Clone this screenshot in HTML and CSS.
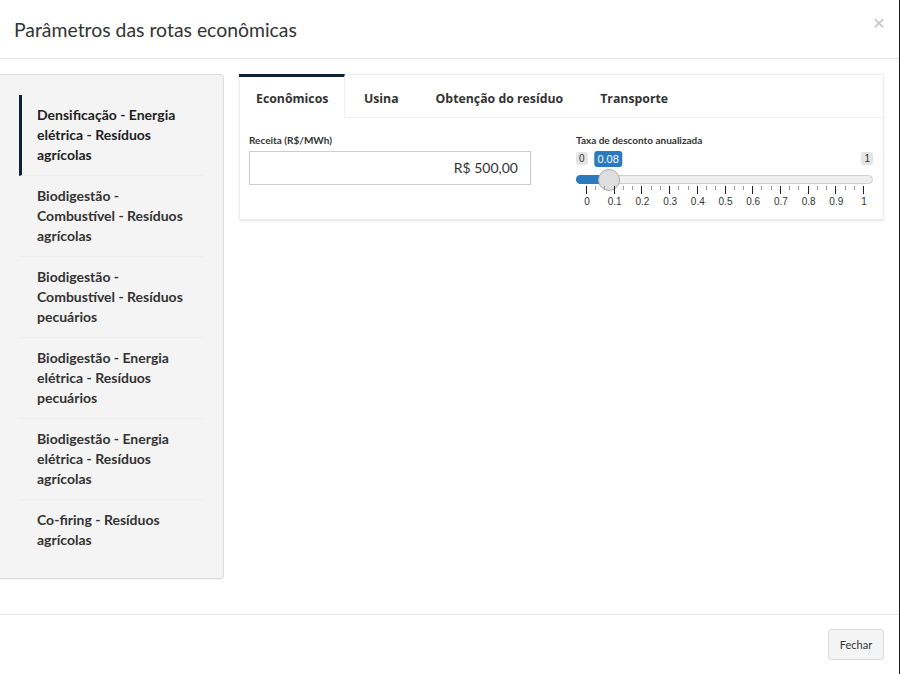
FILE: index.html
```html
<!DOCTYPE html>
<html lang="pt">
<head>
<meta charset="utf-8">
<title>Parâmetros das rotas econômicas</title>
<link rel="stylesheet" href="styles.css">
</head>
<body>
<div class="modal">
  <div class="modal-header">
    <h4 class="modal-title">Parâmetros das rotas econômicas</h4>
    <span class="close">&times;</span>
  </div>
  <div class="modal-body">
    <nav class="side">
      <div class="side-item active">Densificação - Energia elétrica - Resíduos agrícolas</div>
      <div class="side-item">Biodigestão - Combustível - Resíduos agrícolas</div>
      <div class="side-item">Biodigestão - Combustível - Resíduos pecuários</div>
      <div class="side-item">Biodigestão - Energia elétrica - Resíduos pecuários</div>
      <div class="side-item">Biodigestão - Energia elétrica - Resíduos agrícolas</div>
      <div class="side-item last">Co-firing - Resíduos agrícolas</div>
    </nav>
    <section class="main">
      <div class="card">
        <div class="tabs">
          <div class="tab active">Econômicos</div>
          <div class="tab">Usina</div>
          <div class="tab">Obtenção do resíduo</div>
          <div class="tab">Transporte</div>
          <div class="tab-fill"></div>
        </div>
        <div class="card-body">
          <div class="field">
            <label class="lbl">Receita (R$/MWh)</label>
            <div class="input">R$ 500,00</div>
          </div>
          <div class="field">
            <label class="lbl">Taxa de desconto anualizada</label>
            <div class="slider">
              <div class="badges">
                <span class="badge min">0</span>
                <span class="badge val" style="left: 8%">0.08</span>
                <span class="badge max">1</span>
              </div>
              <div class="track">
                <div class="fill" style="width: calc(10px + 0.08 * (100% - 20px))"></div>
                <div class="handle" style="left: calc(10px + 0.08 * (100% - 20px))"></div>
              </div>
              <div class="grid">
                <span class="tk big" style="left:0%"></span><span class="tk" style="left:3.333%"></span><span class="tk" style="left:6.667%"></span>
                <span class="tk big" style="left:10%"></span><span class="tk" style="left:13.333%"></span><span class="tk" style="left:16.667%"></span>
                <span class="tk big" style="left:20%"></span><span class="tk" style="left:23.333%"></span><span class="tk" style="left:26.667%"></span>
                <span class="tk big" style="left:30%"></span><span class="tk" style="left:33.333%"></span><span class="tk" style="left:36.667%"></span>
                <span class="tk big" style="left:40%"></span><span class="tk" style="left:43.333%"></span><span class="tk" style="left:46.667%"></span>
                <span class="tk big" style="left:50%"></span><span class="tk" style="left:53.333%"></span><span class="tk" style="left:56.667%"></span>
                <span class="tk big" style="left:60%"></span><span class="tk" style="left:63.333%"></span><span class="tk" style="left:66.667%"></span>
                <span class="tk big" style="left:70%"></span><span class="tk" style="left:73.333%"></span><span class="tk" style="left:76.667%"></span>
                <span class="tk big" style="left:80%"></span><span class="tk" style="left:83.333%"></span><span class="tk" style="left:86.667%"></span>
                <span class="tk big" style="left:90%"></span><span class="tk" style="left:93.333%"></span><span class="tk" style="left:96.667%"></span>
                <span class="tk big" style="left:100%"></span>
                <span class="gl" style="left:0%">0</span>
                <span class="gl" style="left:10%">0.1</span>
                <span class="gl" style="left:20%">0.2</span>
                <span class="gl" style="left:30%">0.3</span>
                <span class="gl" style="left:40%">0.4</span>
                <span class="gl" style="left:50%">0.5</span>
                <span class="gl" style="left:60%">0.6</span>
                <span class="gl" style="left:70%">0.7</span>
                <span class="gl" style="left:80%">0.8</span>
                <span class="gl" style="left:90%">0.9</span>
                <span class="gl" style="left:100%">1</span>
              </div>
            </div>
          </div>
        </div>
      </div>
    </section>
  </div>
  <div class="modal-footer">
    <button class="btn">Fechar</button>
  </div>
</div>
</body>
</html>
```

FILE: styles.css
```css
html, body {
  margin: 0;
  padding: 0;
  height: 100%;
}
body {
  background: #1e1e1e;
  font-family: Lato, "Open Sans", "Liberation Sans", sans-serif;
  color: #333;
}
.modal {
  width: 899px;
  height: 674px;
  background: #fff;
  display: flex;
  flex-direction: column;
}
.modal-header {
  height: 58px;
  border-bottom: 1px solid #e5e5e5;
  display: flex;
  align-items: center;
  padding: 0 15px 0 14px;
  position: relative;
}
.modal-title {
  margin: 0;
  font-size: 19.4px;
  font-weight: 400;
  color: #333;
  flex: 1;
}
.close {
  font-family: "Liberation Sans", sans-serif;
  font-size: 21px;
  font-weight: 400;
  color: #c4c4c4;
  margin-top: -14px;
  margin-right: -1px;
  line-height: 1;
}
.modal-body {
  flex: 1;
  display: flex;
  align-items: flex-start;
  gap: 15px;
  padding: 15px 15px 35px 0;
}
.side {
  width: 224px;
  flex: none;
  background: #f4f4f4;
  border: 1px solid #dcdcdc;
  border-left: 0;
  border-radius: 0 4px 4px 0;
  box-shadow: 0 1px 1px rgba(0,0,0,.05);
  padding: 20px 20px 18px 19px;
  box-sizing: border-box;
  height: 505px;
}
.side-item {
  font-weight: 700;
  font-size: 14px;
  line-height: 20px;
  padding: 10px 12px 10px 18px;
  border-bottom: 1px solid #ededed;
  color: #333;
}
.side-item.active {
  border-left: 3px solid #0d2238;
  padding-left: 15px;
  color: #222;
}
.side-item.last {
  border-bottom: 0;
}
.main {
  flex: 1;
}
.card {
  background: #fff;
  border: 1px solid #eeeeee;
  box-shadow: 0 1px 2px rgba(0,0,0,.12);
  border-radius: 2px;
}
.tabs {
  display: flex;
  height: 43px;
}
.tab {
  font-family: "Open Sans", sans-serif;
  font-weight: 700;
  font-size: 12.3px;
  color: #333;
  padding: 0 18.5px;
  display: flex;
  align-items: center;
  border-bottom: 1px solid #eeeeee;
  padding-top: 5px;
}
.tab.active {
  border-top: 3px solid #0d2238;
  border-right: 1px solid #eeeeee;
  border-bottom-color: transparent;
  padding: 2px 16px 0 17px;
  margin-top: -1px;
  margin-left: -1px;
}
.tab-fill {
  flex: 1;
  border-bottom: 1px solid #eeeeee;
}
.card-body {
  display: grid;
  grid-template-columns: 282px 1fr;
  column-gap: 45px;
  padding: 15px 10px 18px 9px;
}
.lbl {
  display: block;
  font-size: 10px;
  font-weight: 700;
  line-height: 14px;
  margin-bottom: 4px;
  color: #333;
}
.input {
  height: 34px;
  box-sizing: border-box;
  border: 1px solid #cccccc;
  font-size: 14px;
  line-height: 32px;
  text-align: right;
  padding: 0 12px;
  color: #333;
  margin-bottom: 15px;
}
.slider {
  position: relative;
  height: 50px;
  font-family: "Liberation Sans", Arial, sans-serif;
}
.badges {
  position: relative;
  height: 19px;
}
.badge {
  position: absolute;
  top: 0;
  font-size: 10px;
  line-height: 13px;
  padding: 0 3px;
  background: #e4e4e4;
  color: #333;
  border-radius: 3px;
}
.badge.min { left: 0; top: 1px; }
.badge.max { right: 0; top: 1px; }
.badge.val {
  background: #2a7abf;
  color: #fff;
  font-size: 11px;
  line-height: 16px;
  padding: 0 3px;
  transform: translateX(-50%);
  margin-left: calc(10px - 0.08 * 20px);
}
.track {
  position: relative;
  height: 9px;
  margin-top: 5px;
  background: #efefef;
  border: 1px solid #cfcfcf;
  border-radius: 5px;
  box-sizing: border-box;
}
.fill {
  position: absolute;
  left: -1px;
  top: -1px;
  bottom: -1px;
  background: #2a7abf;
  border-radius: 5px 0 0 5px;
}
.handle {
  position: absolute;
  top: 50%;
  width: 22px;
  height: 22px;
  margin: -11px 0 0 -11px;
  border-radius: 50%;
  background: #dedede;
  border: 1px solid #ababab;
  box-sizing: border-box;
}
.grid {
  position: relative;
  margin: 2px 10px 0 10px;
  height: 24px;
}
.tk {
  position: absolute;
  top: 0;
  width: 1px;
  height: 4px;
  background: #999;
}
.tk.big {
  height: 8px;
  background: #222;
}
.gl {
  position: absolute;
  top: 10px;
  font-size: 10px;
  line-height: 11px;
  color: #333;
  transform: translateX(-50%);
  margin-left: 1px;
}
.modal-footer {
  border-top: 1px solid #e5e5e5;
  display: flex;
  justify-content: flex-end;
  padding: 14px 15px 14px;
}
.btn {
  font-family: Lato, "Open Sans", sans-serif;
  font-size: 11px;
  color: #333;
  background: #f4f4f4;
  border: 1px solid #dcdcdc;
  border-radius: 3px;
  height: 31px;
  width: 56px;
  padding: 0;
}
```
